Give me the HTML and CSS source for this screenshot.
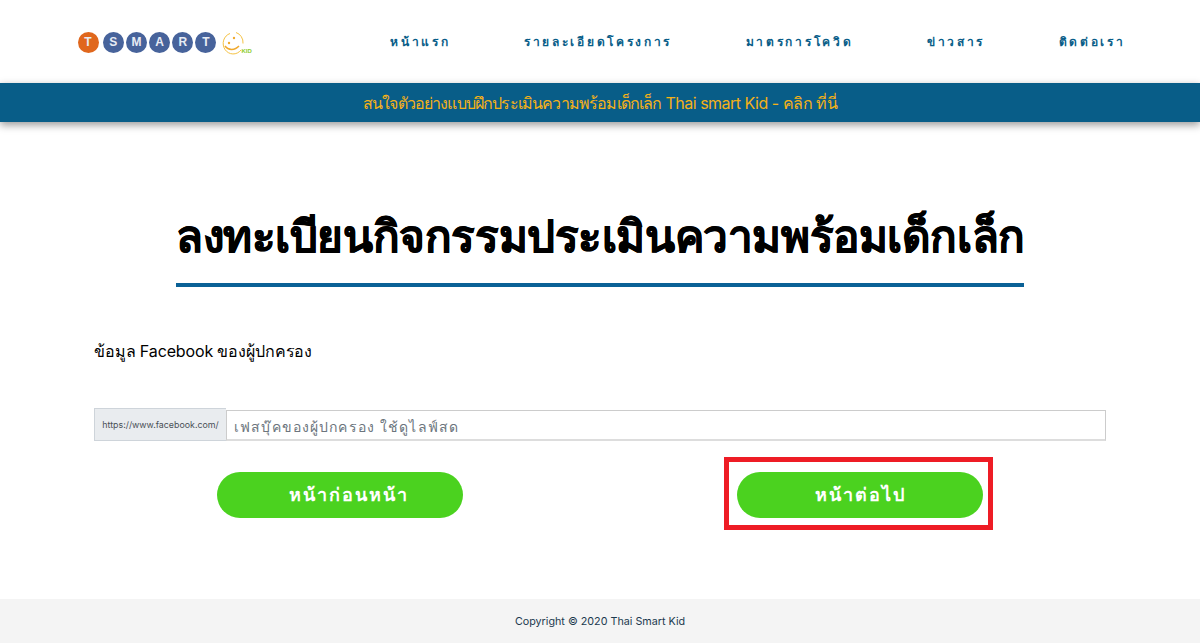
FILE: index.html
```html
<!DOCTYPE html>
<html lang="th">
<head>
<meta charset="utf-8">
<title>Thai Smart Kid</title>
<link rel="stylesheet" href="styles.css">
</head>
<body>
<header class="site-header">
  <a class="logo" href="#">
    <span class="ball ball-orange">T</span><span class="ball">S</span><span class="ball">M</span><span class="ball">A</span><span class="ball">R</span><span class="ball">T</span>
    <svg class="smile" width="22" height="24" viewBox="0 0 22 24" fill="none">
      <path d="M8 2.500A10 10.500 0 1 0 19 19" stroke="#f5c243" stroke-width="1"/>
      <path d="M14 1.500a10 10.500 0 0 1 7 11" stroke="#f5c243" stroke-width="1"/>
      <path d="M3 15c3 4.500 10 4.500 14 0" stroke="#f0a92e" stroke-width="1.500"/>
      <circle cx="12" cy="7" r="1.200" fill="#f0a92e"/><circle cx="7" cy="12" r="1.200" fill="#f0a92e"/>
    </svg>
    <span class="kid">KID</span>
  </a>
  <nav class="nav">
    <a href="#">หน้าแรก</a>
    <a href="#">รายละเอียดโครงการ</a>
    <a href="#">มาตรการโควิด</a>
    <a href="#">ข่าวสาร</a>
    <a href="#">ติดต่อเรา</a>
  </nav>
</header>
<div class="banner"><span class="banner-thai">สนใจตัวอย่างแบบฝึกประเมินความพร้อมเด็กเล็ก</span> Thai smart Kid - คลิก ที่นี่</div>
<main class="content">
  <h1 class="title">ลงทะเบียนกิจกรรมประเมินความพร้อมเด็กเล็ก</h1>
  <p class="lead">ข้อมูล Facebook ของผู้ปกครอง</p>
  <div class="input-group">
    <span class="prefix">https://www.facebook.com/</span>
    <input class="field" type="text" placeholder="เฟสบุ๊คของผู้ปกครอง ใช้ดูไลฟ์สด">
  </div>
  <div class="actions">
    <div class="action"><a class="btn btn-prev" href="#">หน้าก่อนหน้า</a></div>
    <div class="action"><a class="btn highlighted" href="#">หน้าต่อไป</a></div>
  </div>
</main>
<footer class="footer">Copyright © 2020 Thai Smart Kid</footer>
</body>
</html>
```
FILE: styles.css
```css
*, *::before, *::after { box-sizing: border-box; }
html, body { margin: 0; height: 100%; }
body {
  font-family: Inter, "Noto Sans", "Liberation Sans", sans-serif;
  color: #000;
  background: #fff;
  display: flex;
  flex-direction: column;
  min-height: 643px;
  overflow: hidden;
}
a { text-decoration: none; color: inherit; }

.site-header {
  height: 83px;
  display: flex;
  align-items: center;
  justify-content: space-between;
  padding: 0 74.5px 0 77.5px;
}
.logo { display: flex; align-items: center; gap: 2.2px; position: relative; width: 175px; padding-top: 1px; }
.ball {
  width: 21px;
  height: 21px;
  border-radius: 50%;
  background: #47639b;
  color: #e8ecf4;
  font: bold 12px "Liberation Sans", sans-serif;
  display: flex;
  align-items: center;
  justify-content: center;
}
.ball-orange { background: #e0671d; margin-right: 2px; }
.smile { position: absolute; left: 144px; top: 0; }
.kid { position: absolute; left: 164px; top: 17px; font: bold 6px "Liberation Sans", sans-serif; color: #8ccc2a; }

.nav { display: flex; gap: 73.5px; }
.nav a {
  font-size: 12px;
  font-weight: 700;
  letter-spacing: 2.7px;
  color: #085d88;
}

.banner {
  height: 39px;
  background: #085d88;
  color: #f5b117;
  font-size: 16px;
  letter-spacing: -0.5px;
  line-height: 41px;
  text-align: center;
  box-shadow: 0 3px 8px rgba(0,0,0,.4);
  position: relative;
}
.banner-thai { letter-spacing: -0.84px; }

.content {
  flex: 1;
  padding: 0 94px;
}
.title {
  width: 848px;
  margin: 83px auto 0;
  padding-bottom: 15px;
  border-bottom: 4px solid #0a6196;
  font-size: 44px;
  letter-spacing: -0.42px;
  line-height: 63px;
  font-weight: 700;
  -webkit-text-stroke: 0.5px #000;
  text-align: center;
  white-space: nowrap;
}
.lead {
  margin: 52px 0 0;
  font-size: 16px;
  letter-spacing: -0.13px;
  line-height: 24px;
}
.input-group {
  display: flex;
  align-items: flex-end;
  height: 31px;
  margin-top: 47px;
}
.prefix {
  width: 132px;
  height: 33px;
  background: #e9ecef;
  border: 1px solid #ced4da;
  border-right: 0;
  color: #495057;
  font-size: 8.85px;
  display: flex;
  align-items: center;
  justify-content: center;
  white-space: nowrap;
}
.field {
  flex: 1;
  height: 31px;
  border: 1px solid #ccc;
  border-bottom: 2px solid #ddd;
  padding: 2px 7px 0;
  font: 14px Inter, "Noto Sans", sans-serif;
  letter-spacing: 1.13px;
  outline: none;
}
.field::placeholder { color: #6c757d; opacity: 1; }

.actions {
  display: grid;
  grid-template-columns: 492px 492px;
  column-gap: 28px;
  margin-top: 31px;
}
.action { display: flex; justify-content: center; }
.btn {
  width: 246px;
  height: 46px;
  border-radius: 23px;
  background: #4bd21f;
  color: #fff;
  font-size: 18px;
  font-weight: 700;
  letter-spacing: 2px;
  padding-bottom: 2px;
  display: flex;
  align-items: center;
  justify-content: center;
  position: relative;
}
.btn-prev { padding-left: 18px; }
.highlighted::after {
  content: "";
  position: absolute;
  left: -13px;
  top: -15px;
  width: 269px;
  height: 73px;
  border: 5px solid #ee1c25;
}

.footer {
  height: 44px;
  background: #f4f4f4;
  color: #1c3a4f;
  font-size: 10.75px;
  display: flex;
  align-items: center;
  justify-content: center;
}
```
